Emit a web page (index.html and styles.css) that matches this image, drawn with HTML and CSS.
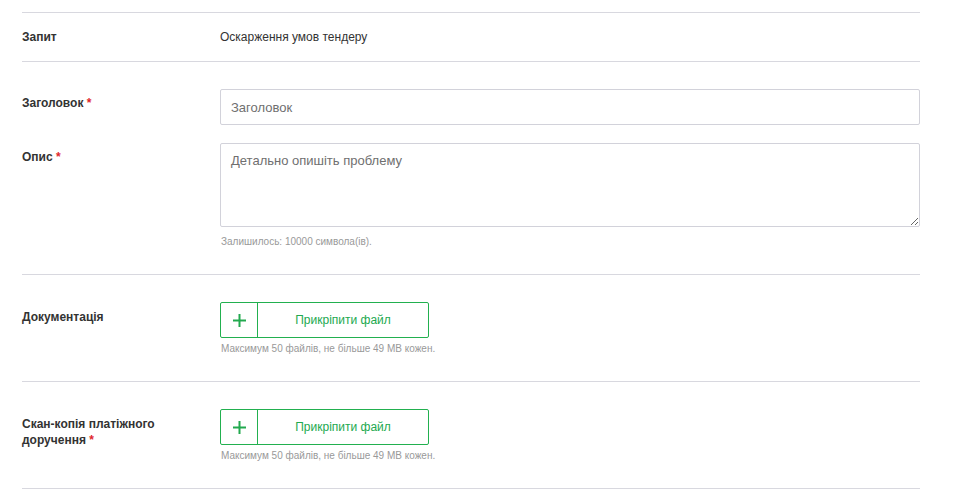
FILE: index.html
```html
<!DOCTYPE html>
<html lang="uk">
<head>
    <meta charset="UTF-8">
    <meta name="viewport" content="width=device-width, initial-scale=1.0">
    <title>Скарга</title>
    <link rel="stylesheet" href="styles.css">
</head>
<body>
    <div class="complaint-form">
        <div class="form-row info-row">
            <div class="form-label">Запит</div>
            <div class="form-value">Оскарження умов тендеру</div>
        </div>

        <div class="form-row section-row">
            <div class="field">
                <div class="form-label">Заголовок <span class="req">*</span></div>
                <div class="form-control">
                    <input type="text" class="text-input" placeholder="Заголовок">
                </div>
            </div>
            <div class="field">
                <div class="form-label">Опис <span class="req">*</span></div>
                <div class="form-control">
                    <textarea class="text-area" placeholder="Детально опишіть проблему"></textarea>
                    <div class="hint hint-area">Залишилось: 10000 символа(ів).</div>
                </div>
            </div>
        </div>

        <div class="form-row section-row">
            <div class="field">
                <div class="form-label label-upload">Документація</div>
                <div class="form-control">
                    <button class="upload-btn">
                        <span class="upload-plus">
                            <svg width="13" height="13" viewBox="0 0 13 13"><path d="M6.5 0v13M0 6.5h13" stroke="#22a94f" stroke-width="2"/></svg>
                        </span>
                        <span class="upload-text">Прикріпити файл</span>
                    </button>
                    <div class="hint">Максимум 50 файлів, не більше 49 MB кожен.</div>
                </div>
            </div>
        </div>

        <div class="form-row section-row">
            <div class="field">
                <div class="form-label label-wrap">
                    <span>Скан-копія платіжного</span><br>
                    <span>доручення</span> <span class="req">*</span>
                </div>
                <div class="form-control">
                    <button class="upload-btn">
                        <span class="upload-plus">
                            <svg width="13" height="13" viewBox="0 0 13 13"><path d="M6.5 0v13M0 6.5h13" stroke="#22a94f" stroke-width="2"/></svg>
                        </span>
                        <span class="upload-text">Прикріпити файл</span>
                    </button>
                    <div class="hint">Максимум 50 файлів, не більше 49 MB кожен.</div>
                </div>
            </div>
        </div>
    </div>
</body>
</html>
```

FILE: styles.css
```css
body {
    margin: 0;
    padding: 0;
    background: #ffffff;
    font-family: "Liberation Sans", Arial, sans-serif;
    color: #333;
}

.complaint-form {
    margin-left: 22px;
    width: 898px;
    padding-top: 12px;
    border-bottom: 1px solid #d8d8df;
}

.form-row {
    border-top: 1px solid #d8d8df;
}

.info-row {
    display: flex;
    padding: 17px 0;
    font-size: 12px;
    line-height: 14px;
}

.info-row .form-label {
    padding-top: 0;
}

.form-label {
    width: 198px;
    flex-shrink: 0;
    font-size: 12px;
    font-weight: bold;
    line-height: 14px;
    color: #333;
    padding-top: 7px;
}

.form-value {
    color: #333;
}

.req {
    color: #e0262b;
}

.section-row {
    padding: 27px 0 26px;
}

.field {
    display: flex;
}

.field + .field {
    margin-top: 18px;
}

.form-control {
    flex: 1;
}

.text-input,
.text-area {
    display: block;
    box-sizing: border-box;
    width: 100%;
    border: 1px solid #d2d2da;
    border-radius: 2px;
    padding: 9px 10px;
    font-family: "Liberation Sans", Arial, sans-serif;
    font-size: 13px;
    color: #333;
    outline: none;
}

.text-input {
    height: 36px;
}

.text-area {
    height: 84px;
    resize: vertical;
    padding-top: 9px;
}

.text-input::placeholder,
.text-area::placeholder {
    color: #6f6f6f;
}

.hint {
    font-size: 10px;
    line-height: 12px;
    color: #999;
    margin-top: 5px;
    padding-left: 1px;
}

.hint-area {
    margin-top: 9px;
}

.label-upload {
    padding-top: 8px;
}

.label-wrap {
    line-height: 16px;
    padding-top: 7px;
}

.upload-btn {
    display: flex;
    box-sizing: border-box;
    width: 209px;
    height: 36px;
    padding: 0;
    border: 1px solid #22b04f;
    border-radius: 2px;
    background: #fff;
    cursor: pointer;
    font-family: "Liberation Sans", Arial, sans-serif;
}

.upload-plus {
    width: 36px;
    height: 100%;
    border-right: 1px solid #22b04f;
    display: flex;
    align-items: center;
    justify-content: center;
}

.upload-text {
    flex: 1;
    display: flex;
    align-items: center;
    justify-content: center;
    font-size: 12px;
    color: #22a94f;
}
```
